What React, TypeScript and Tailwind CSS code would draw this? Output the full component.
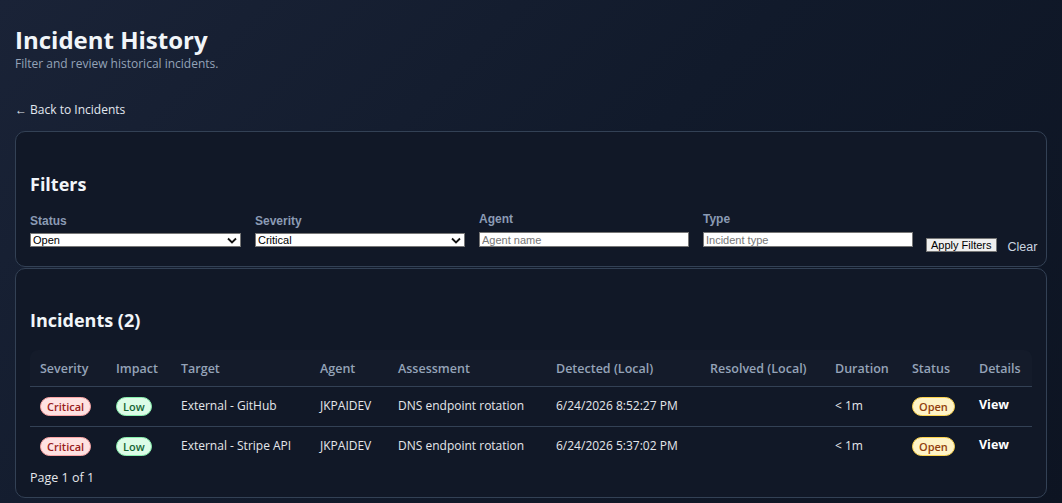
import * as React from "react";

type Incident = {
  severity: string;
  impact: string;
  target: string;
  agent: string;
  assessment: string;
  detected: string;
  resolved: string;
  duration: string;
  status: string;
};

const incidents: Incident[] = [
  {
    severity: "Critical",
    impact: "Low",
    target: "External - GitHub",
    agent: "JKPAIDEV",
    assessment: "DNS endpoint rotation",
    detected: "6/24/2026 8:52:27 PM",
    resolved: "",
    duration: "< 1m",
    status: "Open",
  },
  {
    severity: "Critical",
    impact: "Low",
    target: "External - Stripe API",
    agent: "JKPAIDEV",
    assessment: "DNS endpoint rotation",
    detected: "6/24/2026 5:37:02 PM",
    resolved: "",
    duration: "< 1m",
    status: "Open",
  },
];

const Chevron = () => (
  <svg width="10" height="7" viewBox="0 0 10 7" className="shrink-0">
    <path d="M1 1.5 L5 5.5 L9 1.5" fill="none" stroke="#111" strokeWidth="1.8" />
  </svg>
);

const FakeSelect = ({ value }: { value: string }) => (
  <div className="flex h-[14px] w-full items-center justify-between border border-[#767676] bg-white pl-[2px] pr-[3px] font-['Liberation_Sans',Arial,sans-serif] text-[11px] leading-none text-black">
    <span>{value}</span>
    <Chevron />
  </div>
);

const TextBox = ({ placeholder }: { placeholder: string }) => (
  <input
    placeholder={placeholder}
    className="block h-[15px] w-full border border-[#767676] bg-white px-[2px] py-0 font-['Liberation_Sans',Arial,sans-serif] text-[11px] leading-[13px] text-black placeholder:text-[#757575]"
  />
);

const Label = ({ text }: { text: string }) => (
  <span className="block h-[16px] font-['Liberation_Sans',Arial,sans-serif] text-[12px] font-bold leading-[16px] text-[#8b9bb4]">
    {text}
  </span>
);

const Badge = ({ text, tone }: { text: string; tone: "red" | "green" | "amber" }) => {
  const styles = {
    red: "bg-[#fee2e2] text-[#991b1b] border-[#fca5a5]",
    green: "bg-[#dcfce7] text-[#166534] border-[#86efac]",
    amber: "bg-[#fef3c7] text-[#92400e] border-[#fcd34d]",
  }[tone];
  return (
    <span className={`inline-flex h-[19px] items-center rounded-full border px-[6px] text-[11px] font-semibold leading-none ${styles}`}>
      {text}
    </span>
  );
};

export default function App() {
  const headers = [
    "Severity",
    "Impact",
    "Target",
    "Agent",
    "Assessment",
    "Detected (Local)",
    "Resolved (Local)",
    "Duration",
    "Status",
    "Details",
  ];
  const widths = ["w-[76px]", "w-[65px]", "w-[139px]", "w-[78px]", "w-[158px]", "w-[154px]", "w-[125px]", "w-[77px]", "w-[67px]", ""];

  return (
    <div className="min-h-[503px] w-full bg-[linear-gradient(135deg,#1a2337_0%,#111a2b_50%,#0d1422_100%)] px-[15px] pb-[6px] pt-[26px] font-['Open_Sans','Noto_Sans',sans-serif] text-[#e5e7eb]">
      <h1 className="text-[24px] font-bold leading-[28px] text-[#f1f5f9]">Incident History</h1>
      <p className="mt-[2px] text-[12px] leading-[16px] text-[#94a3b8]">Filter and review historical incidents.</p>

      <a className="mt-[29px] block text-[12px] leading-[18px] text-[#e2e8f0]">← Back to Incidents</a>

      <section className="mt-[12px] h-[136px] rounded-[10px] border border-[#334155] bg-[#111827] px-[14px] pt-[40px]">
        <h2 className="text-[18px] font-bold leading-[24px] text-[#f1f5f9]">Filters</h2>
        <div className="mt-[15px] flex items-start gap-[14px]">
          <div className="mt-[2px] flex w-[211px] shrink-0 flex-col gap-[4px]">
            <Label text="Status" />
            <FakeSelect value="Open" />
          </div>
          <div className="mt-[2px] flex w-[210px] shrink-0 flex-col gap-[4px]">
            <Label text="Severity" />
            <FakeSelect value="Critical" />
          </div>
          <div className="flex w-[210px] shrink-0 flex-col gap-[5px]">
            <Label text="Agent" />
            <TextBox placeholder="Agent name" />
          </div>
          <div className="flex w-[210px] shrink-0 flex-col gap-[5px]">
            <Label text="Type" />
            <TextBox placeholder="Incident type" />
          </div>
          <div className="-ml-[1px] mt-[27px] flex shrink-0 items-start gap-[11px] whitespace-nowrap">
            <button className="h-[14px] border border-[#767676] bg-[#efefef] px-[4px] font-['Liberation_Sans',Arial,sans-serif] text-[11px] leading-[12px] text-black">
              Apply Filters
            </button>
            <span className="mt-[2px] font-['Liberation_Sans',Arial,sans-serif] text-[12.5px] leading-[14px] text-[#cbd5e1]">Clear</span>
          </div>
        </div>
      </section>

      <section className="mt-[1px] h-[230px] rounded-[10px] border border-[#334155] bg-[#111827] px-[14px] pt-[39px]">
        <h2 className="text-[18px] font-bold leading-[24px] text-[#f1f5f9]">Incidents (2)</h2>
        <table className="mt-[18px] w-full border-collapse text-left text-[12px]">
          <thead>
            <tr className="h-[36px] border-b border-[#334155] bg-[#141b2a]">
              {headers.map((h, i) => (
                <th
                  key={h}
                  className={`${widths[i]} px-[10px] pt-[4px] text-[12.5px] font-semibold text-[#94a3b8] ${i === 0 ? "rounded-tl-[8px]" : ""} ${i === headers.length - 1 ? "rounded-tr-[8px]" : ""}`}
                >
                  {h}
                </th>
              ))}
            </tr>
          </thead>
          <tbody>
            {incidents.map((row, idx) => (
              <tr key={idx} className={`h-[40px] ${idx === 0 ? "border-b border-[#334155]" : ""}`}>
                <td className="px-[10px]">
                  <Badge text={row.severity} tone="red" />
                </td>
                <td className="px-[10px]">
                  <Badge text={row.impact} tone="green" />
                </td>
                <td className="px-[10px] text-[#e5e7eb]">{row.target}</td>
                <td className="px-[10px] text-[#e5e7eb]">{row.agent}</td>
                <td className="px-[10px] text-[#e5e7eb]">{row.assessment}</td>
                <td className="px-[10px] text-[#e5e7eb]">{row.detected}</td>
                <td className="px-[10px] text-[#e5e7eb]">{row.resolved}</td>
                <td className="px-[10px] text-[#e5e7eb]">{row.duration}</td>
                <td className="px-[10px]">
                  <Badge text={row.status} tone="amber" />
                </td>
                <td className="px-[10px] align-middle">
                  <span className="relative -top-[1px] text-[12.5px] font-bold text-white">View</span>
                </td>
              </tr>
            ))}
          </tbody>
        </table>
        <p className="mt-[3px] text-[12.5px] leading-[18px] text-[#e5e7eb]">Page 1 of 1</p>
      </section>
    </div>
  );
}
